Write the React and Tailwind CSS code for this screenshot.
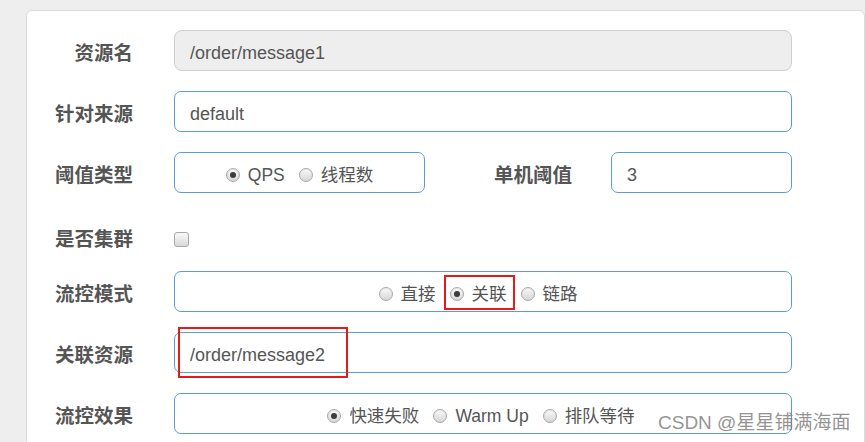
import React from "react";

const font = "font-['Liberation_Sans','Noto_Sans_CJK_SC',sans-serif]";

const Label = ({ children }) => (
  <div className="w-[106px] shrink-0 pt-[6px] text-right text-[19.5px] font-bold leading-none text-[#555]">
    {children}
  </div>
);

const Radio = ({ checked, children }) => (
  <label className="flex h-[22px] items-center gap-[8px] text-[17.5px] text-[#555]">
    <span className="flex h-[14px] w-[14px] items-center justify-center rounded-full border border-[#a9a9a9] bg-gradient-to-b from-[#fafafa] to-[#d6d6d6] shadow-[inset_0_1px_1px_rgba(0,0,0,0.08)]">
      {checked && <span className="h-[6px] w-[6px] rounded-full bg-[#3c3c3c]" />}
    </span>
    <span>{children}</span>
  </label>
);

const Box = ({ className = "", children }) => (
  <div
    className={`flex h-[41px] items-center rounded-[7px] border border-[#5c9bd6] bg-white pt-[5px] ${className}`}
  >
    {children}
  </div>
);

export default function App() {
  return (
    <div className={`relative h-[442px] w-[865px] overflow-hidden bg-[#eeeeee] pl-[26px] pt-[10px] ${font}`}>
      <div className="h-[460px] w-[839px] rounded-t-[6px] border border-[#dcdcdc] bg-white pt-[19px]">
        <div className="flex flex-col gap-[20px]">
          {/* 资源名 */}
          <div className="flex items-center">
            <Label>资源名</Label>
            <div className="ml-[41px] flex h-[41px] w-[618px] items-center rounded-[8px] border border-[#cfcfcf] bg-[#eeeeee] pl-[15px] pt-[5px] text-[18px] text-[#555]">
              /order/message1
            </div>
          </div>

          {/* 针对来源 */}
          <div className="flex items-center">
            <Label>针对来源</Label>
            <Box className="ml-[41px] w-[618px] pl-[15px] text-[18px] text-[#555]">default</Box>
          </div>

          {/* 阈值类型 / 单机阈值 */}
          <div className="flex items-center">
            <Label>阈值类型</Label>
            <Box className="ml-[41px] w-[251px] justify-center gap-[14px]">
              <Radio checked>QPS</Radio>
              <Radio>线程数</Radio>
            </Box>
            <div className="w-[147px] pt-[6px] text-right text-[19.5px] font-bold leading-none text-[#555]">单机阈值</div>
            <Box className="ml-[39px] w-[181px] pl-[15px] text-[18px] text-[#555]">3</Box>
          </div>

          {/* 是否集群 */}
          <div className="flex h-[38px] items-center pt-[10px]">
            <Label>是否集群</Label>
            <span className="ml-[41px] mt-[4px] h-[15px] w-[15px] rounded-[3px] border border-[#a9a9a9] bg-gradient-to-b from-[#fafafa] to-[#d9d9d9]" />
          </div>

          {/* 流控模式 */}
          <div className="flex items-center">
            <Label>流控模式</Label>
            <Box className="ml-[41px] w-[618px] justify-center gap-[14px] pr-[10px]">
              <Radio>直接</Radio>
              <div className="relative">
                <Radio checked>关联</Radio>
                <span className="absolute -bottom-[5px] -left-[6px] -right-[8px] -top-[8px] border-2 border-[#e41b1b]" />
              </div>
              <Radio>链路</Radio>
            </Box>
          </div>

          {/* 关联资源 */}
          <div className="flex items-center">
            <Label>关联资源</Label>
            <div className="relative ml-[41px]">
              <Box className="w-[618px] pl-[15px] text-[18px] text-[#555]">/order/message2</Box>
              <span className="absolute left-[4px] top-[-5px] h-[51px] w-[170px] border-2 border-[#e41b1b]" />
            </div>
          </div>

          {/* 流控效果 */}
          <div className="flex items-center">
            <Label>流控效果</Label>
            <Box className="ml-[41px] w-[618px] justify-center gap-[14px] pr-[4px]">
              <Radio checked>快速失败</Radio>
              <Radio>Warm Up</Radio>
              <Radio>排队等待</Radio>
            </Box>
          </div>
        </div>
      </div>

      <div className="absolute left-[658px] top-[413px] text-[19px] leading-none text-[#777]/80">
        CSDN @星星铺满海面
      </div>
    </div>
  );
}
